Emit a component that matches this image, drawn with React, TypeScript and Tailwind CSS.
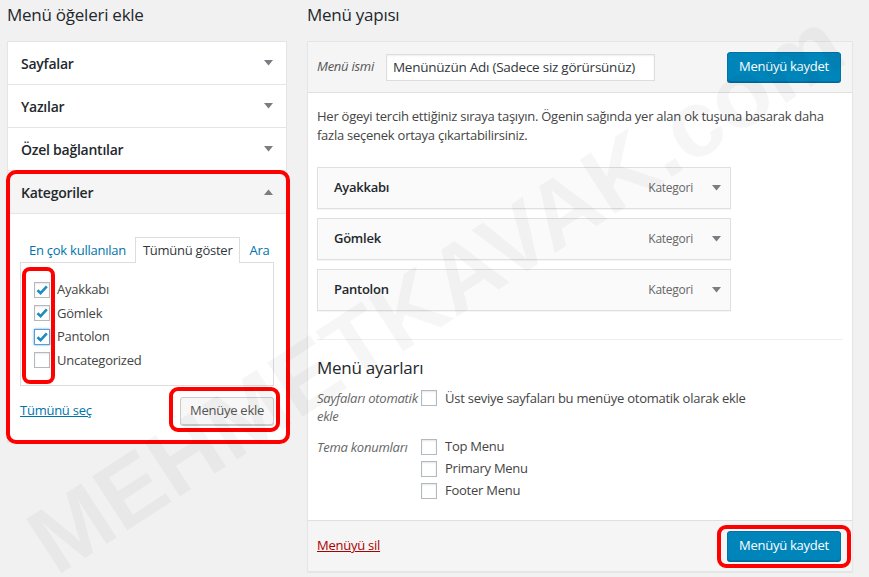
import React from "react";

const accordionItems = ["Sayfalar", "Yazılar", "Özel bağlantılar"];

const categories = [
  { name: "Ayakkabı", checked: true },
  { name: "Gömlek", checked: true },
  { name: "Pantolon", checked: true, focus: true },
  { name: "Uncategorized", checked: false },
];

const menuItems = ["Ayakkabı", "Gömlek", "Pantolon"];

const Tri = ({ up = false }: { up?: boolean }) => (
  <svg width="9" height="6" viewBox="0 0 9 6" className="shrink-0">
    <path d={up ? "M0 6 L4.5 0.5 L9 6 Z" : "M0 0 L9 0 L4.5 5.5 Z"} fill="#7a7e82" />
  </svg>
);

const Checkbox = ({ checked = false, focus = false }: { checked?: boolean; focus?: boolean }) => (
  <span
    className={
      "w-[16px] h-[16px] shrink-0 bg-white border flex items-center justify-center " +
      (focus
        ? "border-[#5b9dd9] shadow-[0_0_2px_rgba(30,140,190,0.8)]"
        : "border-[#b4b9be] shadow-[inset_0_1px_2px_rgba(0,0,0,0.1)]")
    }
  >
    {checked && (
      <svg width="14" height="14" viewBox="0 0 14 14">
        <path d="M2.5 7.2 L5.6 10.2 L11.8 3.4" stroke="#1e8cbe" strokeWidth="2.6" fill="none" />
      </svg>
    )}
  </span>
);

const RedBox = ({ className }: { className: string }) => (
  <div className={"absolute border-[4px] border-[#ff0000] pointer-events-none " + className} />
);

const SaveButton = () => (
  <button className="h-[30px] w-[114px] rounded-[3px] bg-[#0085ba] border border-[#0073aa] shadow-[0_1px_0_#006799] text-white text-[13px] whitespace-nowrap">
    Menüyü kaydet
  </button>
);

export default function App() {
  return (
    <div className="relative w-[869px] h-[577px] overflow-hidden bg-[#f1f1f1] text-[#444] tracking-[-0.25px] font-['Open_Sans',sans-serif]">
      <div className="flex gap-[20px] pl-[7px]">
        {/* left column */}
        <div className="w-[280px] shrink-0">
          <h2 className="pt-[4px] leading-[22px] text-[17px] text-[#23282d] mb-[15px]">Menü öğeleri ekle</h2>
          <div className="border border-[#e5e5e5] bg-white shadow-[0_1px_1px_rgba(0,0,0,0.04)]">
            {accordionItems.map((t) => (
              <div
                key={t}
                className="h-[43px] flex items-center justify-between pl-[13px] pr-[13px] border-b border-[#e5e5e5]"
              >
                <span className="text-[14px] font-semibold text-[#23282d]">{t}</span>
                <Tri />
              </div>
            ))}
            <div className="relative">
              <div className="h-[43px] flex items-center justify-between pl-[13px] pr-[13px] border-b border-[#e5e5e5] bg-[#f5f5f5]">
                <span className="text-[14px] font-semibold text-[#23282d]">Kategoriler</span>
                <Tri up />
              </div>
              <div className="px-[12px] pt-[23px] pb-[16px]">
                <div className="flex text-[13px] leading-[24px] whitespace-nowrap">
                  <span className="pl-[8px] pr-[8px] border border-transparent text-[#0073aa]">En çok kullanılan</span>
                  <span className="px-[7px] border border-b-0 border-[#ddd] bg-white text-[#32373c] relative z-10 h-[26px]">
                    Tümünü göster
                  </span>
                  <span className="px-[8px] border border-transparent text-[#0073aa]">Ara</span>
                </div>
                <div className="relative -mt-px border border-[#ddd] bg-white pt-[15px] pb-[13px] pl-[13px]">
                  {categories.map((c) => (
                    <div key={c.name} className="h-[23.5px] flex items-center gap-[7px] text-[13px] text-[#444]">
                      <Checkbox checked={c.checked} focus={c.focus} />
                      <span>{c.name}</span>
                    </div>
                  ))}
                  <RedBox className="left-[1px] top-[4px] w-[33px] h-[117px] rounded-[8px]" />
                </div>
                <div className="mt-[11px] flex items-center justify-between">
                  <span className="text-[13px] text-[#0073aa] underline">Tümünü seç</span>
                  <div className="relative">
                    <button className="h-[28px] w-[94px] rounded-[3px] bg-[#f7f7f7] border border-[#ccc] shadow-[0_1px_0_#ccc] text-[13px] text-[#555] whitespace-nowrap">
                      Menüye ekle
                    </button>
                    <RedBox className="-left-[11px] -right-[6px] -top-[10px] -bottom-[7px] rounded-[9px]" />
                  </div>
                </div>
              </div>
              <RedBox className="-left-[2px] -right-[4px] -top-[1px] -bottom-[3px] rounded-[10px]" />
            </div>
          </div>
        </div>

        {/* right column */}
        <div className="w-[546px] shrink-0">
          <h2 className="pt-[4px] leading-[22px] text-[17px] text-[#23282d] mb-[15px]">Menü yapısı</h2>
          <div className="border border-[#e5e5e5] bg-white shadow-[0_1px_1px_rgba(0,0,0,0.04)]">
            <div className="h-[51px] bg-[#f5f5f5] border-b border-[#dfdfdf] flex items-center pl-[9px] pr-[11px]">
              <span className="italic text-[13px] text-[#555]">Menü ismi</span>
              <div className="ml-[12px] w-[269px] h-[27px] bg-white border border-[#ddd] shadow-[inset_0_1px_2px_rgba(0,0,0,0.07)] flex items-center pl-[6px] text-[13.5px] text-[#32373c] whitespace-nowrap overflow-hidden">
                Menünüzün Adı (Sadece siz görürsünüz)
              </div>
              <div className="ml-auto">
                <SaveButton />
              </div>
            </div>

            <div className="px-[9px] pt-[14px] pb-[18px]">
              <p className="text-[13px] leading-[19px] text-[#444] w-[515px]">
                Her ögeyi tercih ettiğiniz sıraya taşıyın. Ögenin sağında yer alan ok tuşuna basarak daha fazla seçenek ortaya çıkartabilirsiniz.
              </p>
              <div className="mt-[22px] flex flex-col gap-[9px]">
                {menuItems.map((m) => (
                  <div
                    key={m}
                    className="w-[414px] h-[42px] bg-[#fafafa] border border-[#dfdfdf] shadow-[0_1px_1px_rgba(0,0,0,0.04)] flex items-center pl-[16px] pr-[9px]"
                  >
                    <span className="text-[13px] font-semibold text-[#23282d]">{m}</span>
                    <span className="ml-auto text-[12px] text-[#666] mr-[19px]">Kategori</span>
                    <Tri />
                  </div>
                ))}
              </div>
              <div className="mt-[28px] border-t border-[#eee]" />
              <h3 className="mt-[16px] text-[17px] leading-[24px] text-[#23282d]">Menü ayarları</h3>
              <div className="mt-[9px] flex">
                <div className="w-[104px] italic text-[13px] leading-[18px] text-[#666] whitespace-nowrap">
                  Sayfaları otomatik
                  <br />
                  ekle
                </div>
                <div className="flex items-start gap-[8px] h-[18px]">
                  <span className="mt-px">
                    <Checkbox />
                  </span>
                  <span className="text-[13px] leading-[18px] text-[#444] whitespace-nowrap">
                    Üst seviye sayfaları bu menüye otomatik olarak ekle
                  </span>
                </div>
              </div>
              <div className="mt-[11px] flex">
                <div className="w-[104px] italic text-[13px] leading-[18px] text-[#666] pt-[2px]">Tema konumları</div>
                <div className="flex flex-col">
                  {["Top Menu", "Primary Menu", "Footer Menu"].map((l) => (
                    <div key={l} className="h-[22px] flex items-center gap-[8px] text-[13px] text-[#444]">
                      <Checkbox />
                      <span>{l}</span>
                    </div>
                  ))}
                </div>
              </div>
            </div>

            <div className="h-[51px] bg-[#f5f5f5] border-t border-[#dfdfdf] flex items-center justify-between pl-[9px] pr-[11px]">
              <span className="text-[13px] text-[#a00] underline">Menüyü sil</span>
              <div className="relative">
                <SaveButton />
                <RedBox className="-left-[10px] -right-[10px] -top-[6px] -bottom-[7px] rounded-[9px]" />
              </div>
            </div>
          </div>
        </div>
      </div>

      {/* watermark */}
      <div className="pointer-events-none absolute left-[436px] top-[292px] -translate-x-1/2 -translate-y-1/2 -rotate-[33deg] whitespace-nowrap font-['Liberation_Sans',sans-serif] font-bold text-[94px] leading-none tracking-normal text-black/[0.035]">
        MEHMETKAVAK.com
      </div>
    </div>
  );
}
